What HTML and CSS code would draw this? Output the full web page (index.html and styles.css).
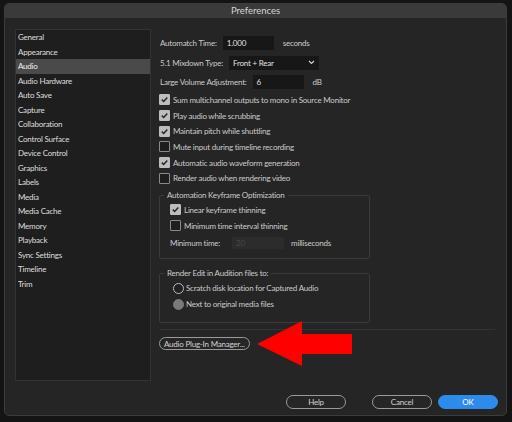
FILE: index.html
```html
<!DOCTYPE html>
<html lang="en">
<head>
    <meta charset="UTF-8">
    <meta name="viewport" content="width=device-width, initial-scale=1.0">
    <title>Preferences</title>
    <link rel="stylesheet" href="styles.css">
</head>
<body>
    <div class="dialog">
        <div class="titlebar">Preferences</div>

        <div class="main">
            <ul class="sidebar">
                <li>General</li>
                <li>Appearance</li>
                <li class="active">Audio</li>
                <li>Audio Hardware</li>
                <li>Auto Save</li>
                <li>Capture</li>
                <li>Collaboration</li>
                <li>Control Surface</li>
                <li>Device Control</li>
                <li>Graphics</li>
                <li>Labels</li>
                <li>Media</li>
                <li>Media Cache</li>
                <li>Memory</li>
                <li>Playback</li>
                <li>Sync Settings</li>
                <li>Timeline</li>
                <li>Trim</li>
            </ul>

            <div class="pane">
                <div class="field-row">
                    <span class="label">Automatch Time:</span>
                    <span class="input w-automatch">1.000</span>
                    <span class="unit">seconds</span>
                </div>
                <div class="field-row gap-6">
                    <span class="label">5.1 Mixdown Type:</span>
                    <span class="select">
                        Front + Rear
                        <svg class="chevron" width="7" height="5" viewBox="0 0 7 5">
                            <polyline points="1,1 3.5,3.5 6,1" fill="none" stroke="#cfcfcf" stroke-width="1.2"/>
                        </svg>
                    </span>
                </div>
                <div class="field-row gap-6">
                    <span class="label">Large Volume Adjustment:</span>
                    <span class="input w-volume">6</span>
                    <span class="unit">dB</span>
                </div>

                <div class="checks">
                    <div class="check on">Sum multichannel outputs to mono in Source Monitor</div>
                    <div class="check on">Play audio while scrubbing</div>
                    <div class="check on">Maintain pitch while shuttling</div>
                    <div class="check">Mute input during timeline recording</div>
                    <div class="check on">Automatic audio waveform generation</div>
                    <div class="check">Render audio when rendering video</div>
                </div>

                <fieldset class="group group-keyframe">
                    <legend>Automation Keyframe Optimization</legend>
                    <div class="check on">Linear keyframe thinning</div>
                    <div class="check">Minimum time interval thinning</div>
                    <div class="field-row min-time">
                        <span class="label">Minimum time:</span>
                        <span class="input disabled">20</span>
                        <span class="unit">milliseconds</span>
                    </div>
                </fieldset>

                <fieldset class="group group-audition">
                    <legend>Render Edit in Audition files to:</legend>
                    <div class="radio">Scratch disk location for Captured Audio</div>
                    <div class="radio filled">Next to original media files</div>
                </fieldset>

                <div class="separator"></div>

                <div class="plugin-row">
                    <button class="btn">Audio Plug-In Manager...</button>
                    <svg class="arrow" width="96" height="46" viewBox="0 0 96 46">
                        <polygon points="0,23 45,0 45,13 95,13 95,33 45,33 45,45" fill="#ff0000"/>
                    </svg>
                </div>
            </div>
        </div>

        <div class="footer">
            <button class="btn wide">Help</button>
            <button class="btn wide">Cancel</button>
            <button class="btn wide primary">OK</button>
        </div>
    </div>
</body>
</html>
```

FILE: styles.css
```css
* {
    margin: 0;
    padding: 0;
    box-sizing: border-box;
}

body {
    background: #141414;
    width: 512px;
    height: 422px;
    overflow: hidden;
    font-family: Lato, "Open Sans", sans-serif;
    font-size: 8px;
    letter-spacing: -0.22px;
    color: #cbcbcb;
}

.dialog {
    margin: 3px 0 0 4px;
    width: 503px;
    height: 413px;
    background: #252525;
    border: 1px solid #3c3c3c;
    border-radius: 5px;
    overflow: hidden;
    display: flex;
    flex-direction: column;
}

.titlebar {
    height: 14px;
    line-height: 14px;
    background: #3a3a3a;
    text-align: center;
    color: #d4d4d4;
    font-size: 9.5px;
    letter-spacing: 0;
}

.main {
    display: flex;
    align-items: flex-start;
    height: 363px;
}

/* left category list */
.sidebar {
    list-style: none;
    margin: 11px 0 0 10px;
    width: 136px;
    height: 352px;
    background: #1e1e1e;
    border: 1px solid #333;
}

.sidebar li {
    height: 14.5px;
    line-height: 14.5px;
    padding-left: 2px;
    color: #dedede;
}

.sidebar li.active {
    background: #4a4a4a;
    color: #f2f2f2;
}

/* right settings pane */
.pane {
    margin: 18px 0 0 8px;
    width: 336px;
}

.field-row {
    display: flex;
    align-items: center;
    height: 14px;
    padding-left: 1px;
}

.gap-6 {
    margin-top: 5.5px;
}

.label {
    margin-right: 6px;
}

.input {
    height: 14px;
    line-height: 14px;
    background: #171717;
    color: #e0e0e0;
    padding-left: 4px;
}

.w-automatch {
    width: 51px;
}

.w-volume {
    width: 51px;
}

.unit {
    margin-left: 9px;
}

.select {
    display: flex;
    align-items: center;
    justify-content: space-between;
    width: 90px;
    height: 14px;
    background: #171717;
    color: #e0e0e0;
    padding: 0 4px;
}

.chevron {
    display: block;
}

.checks {
    margin-top: 3px;
}

.check {
    display: flex;
    align-items: center;
    height: 15.7px;
}

.check::before {
    content: '';
    width: 9px;
    height: 9px;
    margin-right: 3px;
    border: 1px solid #8a8a8a;
    border-radius: 1px;
    background: #1e1e1e;
    flex-shrink: 0;
}

.check.on::before {
    background: #bdbdbd url("data:image/svg+xml,%3Csvg xmlns='http://www.w3.org/2000/svg' viewBox='0 0 9 9'%3E%3Cpolyline points='1.8,4.6 3.7,6.5 7.3,2.4' fill='none' stroke='%23262626' stroke-width='1.5'/%3E%3C/svg%3E") center / 9px 9px no-repeat;
    border-color: #bdbdbd;
}

.group {
    width: 211px;
    border: 1px solid #3a3a3a;
    border-radius: 2px;
    padding: 0 0 0 10px;
}

.group legend {
    margin-left: -6px;
    padding: 0 3px;
    line-height: 10px;
}

.group-keyframe {
    margin-top: 4px;
    height: 69px;
    padding-top: 2px;
}

.min-time {
    margin-top: 2px;
    padding-left: 0;
}

.min-time .label {
    margin-right: 12px;
}

.input.disabled {
    width: 52px;
    height: 12px;
    line-height: 12px;
    background: #2c2c2c;
    color: #4a4a4a;
}

.min-time .unit {
    margin-left: 7px;
}

.group-audition {
    margin-top: 9px;
    height: 55px;
    padding-left: 13px;
    padding-top: 2px;
}

.group-audition legend {
    margin-left: -9px;
}

.radio {
    display: flex;
    align-items: center;
    height: 16px;
}

.radio::before {
    content: '';
    width: 9px;
    height: 9px;
    margin-right: 2px;
    border: 1.2px solid #bcbcbc;
    border-radius: 50%;
    background: #202020;
    flex-shrink: 0;
}

.radio.filled::before {
    background: #7a7a7a;
    border-color: #7a7a7a;
}

.separator {
    margin-top: 6px;
    height: 1px;
    width: 336px;
    background: #333;
}

.plugin-row {
    position: relative;
    margin-top: 7px;
    height: 13px;
}

.btn {
    font-family: inherit;
    font-size: 8px;
    letter-spacing: -0.22px;
    color: #d2d2d2;
    background: #262626;
    border: 1.5px solid #9a9a9a;
    border-radius: 8px;
    height: 13px;
    padding: 0 4px;
    line-height: 10px;
}

/* annotation arrow over the dialog */
.arrow {
    position: absolute;
    left: 98px;
    top: -16px;
}

.footer {
    display: flex;
    justify-content: flex-end;
    gap: 6px;
    padding: 14px 8px 0 0;
}

.btn.wide {
    width: 60px;
    height: 14px;
}

.btn.wide:nth-child(2) {
    margin-left: 20px;
}

.btn.primary {
    background: #2d8ceb;
    border-color: #2d8ceb;
    color: #fff;
}
```
